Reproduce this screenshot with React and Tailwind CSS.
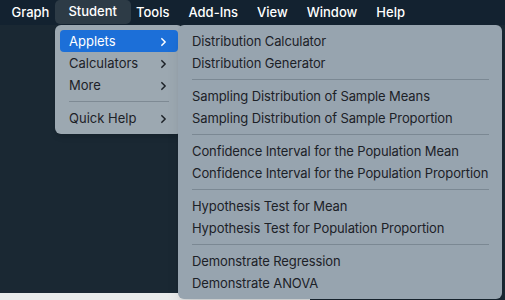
import React from "react";

const MENUBAR = ["Graph", "Student", "Tools", "Add-Ins", "View", "Window", "Help"];

const STUDENT_ITEMS = [
  { label: "Applets", sub: true, active: true },
  { label: "Calculators", sub: true },
  { label: "More", sub: true },
  { sep: true },
  { label: "Quick Help", sub: true },
];

const APPLET_GROUPS = [
  ["Distribution Calculator", "Distribution Generator"],
  ["Sampling Distribution of Sample Means", "Sampling Distribution of Sample Proportion"],
  ["Confidence Interval for the Population Mean", "Confidence Interval for the Population Proportion"],
  ["Hypothesis Test for Mean", "Hypothesis Test for Population Proportion"],
  ["Demonstrate Regression", "Demonstrate ANOVA"],
];

function Chevron({ className }) {
  return (
    <svg viewBox="0 0 8 12" className={className} fill="none" stroke="currentColor" strokeWidth="1.8" strokeLinecap="round" strokeLinejoin="round">
      <polyline points="2,2 6,6 2,10" />
    </svg>
  );
}

export default function App() {
  return (
    <div
      className="relative flex h-[300px] w-[505px] flex-col overflow-hidden bg-[#1a2833] text-[13px] antialiased"
      style={{ fontFamily: '"Inter","Liberation Sans",sans-serif' }}
    >
      <div className="flex h-[25px] shrink-0 items-center bg-[#132230] pl-[2px] font-medium text-white">
        {MENUBAR.map((name) =>
          name === "Student" ? (
            <div key={name} className="-mx-[4px] flex h-[24px] items-center self-start rounded-[5px] bg-[#2d3b46] px-[13.5px]">
              {name}
            </div>
          ) : (
            <div key={name} className="px-[9.5px]">
              {name}
            </div>
          ),
        )}
      </div>

      <div className="flex-1" />
      <div className="flex h-[7px] shrink-0">
        <div className="w-[310px] bg-[#e9ebeb]" />
        <div className="flex-1" />
      </div>

      {/* Student dropdown */}
      <div className="absolute left-[55px] top-[25px] w-[128px] rounded-[6px] bg-[#9ca8b1] px-[5px] pb-[5px] pt-[5px] text-[#1c2127] shadow-md">
        {STUDENT_ITEMS.map((item, i) =>
          item.sep ? (
            <div key={i} className="flex h-[11px] items-center pl-[9px] pr-[9px]">
              <div className="h-px w-full bg-[#7e8a94]" />
            </div>
          ) : (
            <div
              key={item.label}
              className={`flex h-[22px] items-center justify-between rounded-[4px] pl-[9px] pr-[11px] pt-px ${
                item.active ? "bg-[#1c6fd8] text-white" : ""
              }`}
            >
              <span>{item.label}</span>
              {item.sub && <Chevron className="h-[10px] w-[7px]" />}
            </div>
          ),
        )}
      </div>

      {/* Applets submenu */}
      <div className="absolute left-[178px] top-[25px] w-[324px] rounded-[6px] bg-[#97a4af] px-[5px] pb-[5px] pt-[5px] tracking-[-0.1px] text-[#1c2127] shadow-lg">
        {APPLET_GROUPS.map((group, gi) => (
          <div key={gi}>
            {gi > 0 && (
              <div className="flex h-[11px] items-center pl-[9px] pr-[8px]">
                <div className="h-px w-full bg-[#7b8893]" />
              </div>
            )}
            {group.map((label) => (
              <div key={label} className="flex h-[22px] items-center pl-[9px] pt-px">
                {label}
              </div>
            ))}
          </div>
        ))}
      </div>
    </div>
  );
}
